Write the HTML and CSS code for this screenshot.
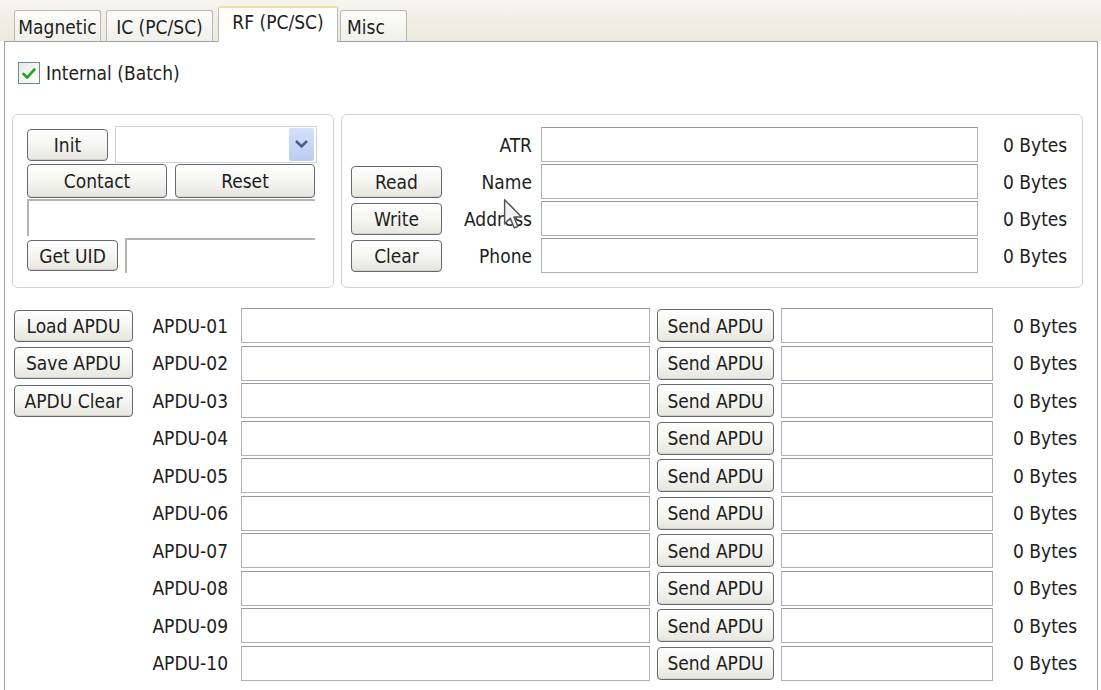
FILE: index.html
```html
<!DOCTYPE html>
<html>
<head>
<meta charset="utf-8">
<title>RF (PC/SC)</title>
<link rel="stylesheet" href="styles.css">
</head>
<body>
<div class="tabs">
  <div class="tab t-mag">Magnetic</div>
  <div class="tab t-ic">IC (PC/SC)</div>
  <div class="tab t-rf active">RF (PC/SC)</div>
  <div class="tab t-misc">Misc</div>
</div>
<div class="panel">
  <div class="check">
    <span class="box"><svg viewBox="0 0 22 22" width="22" height="22"><path d="M5 11 L9 15 L17 6" fill="none" stroke="#2aa12a" stroke-width="3" stroke-linecap="round" stroke-linejoin="round"/></svg></span>
    <span>Internal (Batch)</span>
  </div>

  <div class="groups">
    <div class="group g1">
      <div class="g1-row r1">
        <button class="btn b-init">Init</button>
        <div class="combo"><span class="drop"><svg viewBox="0 0 25 33" width="25" height="33"><path d="M7 13 L12.5 18.5 L18 13" fill="none" stroke="#4c5f86" stroke-width="2.6"/></svg></span></div>
      </div>
      <div class="g1-row r2">
        <button class="btn b-half">Contact</button>
        <button class="btn b-half">Reset</button>
      </div>
      <div class="sunken s-wide"></div>
      <div class="g1-row r4">
        <button class="btn b-uid">Get UID</button>
        <div class="sunken s-uid"></div>
      </div>
    </div>

    <div class="group g2">
      <div class="g2-grid">
        <span class="lbl r-1">ATR</span><div class="field f-card r-1"></div><span class="bytes r-1">0 Bytes</span>
        <button class="btn b-card r-2">Read</button><span class="lbl r-2">Name</span><div class="field f-card r-2"></div><span class="bytes r-2">0 Bytes</span>
        <button class="btn b-card r-3">Write</button><span class="lbl r-3">Address</span><div class="field f-card r-3"></div><span class="bytes r-3">0 Bytes</span>
        <button class="btn b-card r-4">Clear</button><span class="lbl r-4">Phone</span><div class="field f-card r-4"></div><span class="bytes r-4">0 Bytes</span>
      </div>
      <svg class="cursor" viewBox="0 0 13 21" width="21" height="34"><path d="M1 1 L1 16 L4.5 12.5 L7 18.5 L9.2 17.6 L6.8 11.8 L11.5 11.8 Z" fill="#f4f4f4" stroke="#555" stroke-width="0.9" stroke-linejoin="round"/></svg>
    </div>
  </div>

  <div class="apdu">
    <button class="btn b-side a-1">Load APDU</button>
    <button class="btn b-side a-2">Save APDU</button>
    <button class="btn b-side a-3">APDU Clear</button>

    <span class="alb a-1">APDU-01</span><div class="field af1 a-1"></div><button class="btn b-send a-1">Send APDU</button><div class="field af2 a-1"></div><span class="abytes a-1">0 Bytes</span>
    <span class="alb a-2">APDU-02</span><div class="field af1 a-2"></div><button class="btn b-send a-2">Send APDU</button><div class="field af2 a-2"></div><span class="abytes a-2">0 Bytes</span>
    <span class="alb a-3">APDU-03</span><div class="field af1 a-3"></div><button class="btn b-send a-3">Send APDU</button><div class="field af2 a-3"></div><span class="abytes a-3">0 Bytes</span>
    <span class="alb a-4">APDU-04</span><div class="field af1 a-4"></div><button class="btn b-send a-4">Send APDU</button><div class="field af2 a-4"></div><span class="abytes a-4">0 Bytes</span>
    <span class="alb a-5">APDU-05</span><div class="field af1 a-5"></div><button class="btn b-send a-5">Send APDU</button><div class="field af2 a-5"></div><span class="abytes a-5">0 Bytes</span>
    <span class="alb a-6">APDU-06</span><div class="field af1 a-6"></div><button class="btn b-send a-6">Send APDU</button><div class="field af2 a-6"></div><span class="abytes a-6">0 Bytes</span>
    <span class="alb a-7">APDU-07</span><div class="field af1 a-7"></div><button class="btn b-send a-7">Send APDU</button><div class="field af2 a-7"></div><span class="abytes a-7">0 Bytes</span>
    <span class="alb a-8">APDU-08</span><div class="field af1 a-8"></div><button class="btn b-send a-8">Send APDU</button><div class="field af2 a-8"></div><span class="abytes a-8">0 Bytes</span>
    <span class="alb a-9">APDU-09</span><div class="field af1 a-9"></div><button class="btn b-send a-9">Send APDU</button><div class="field af2 a-9"></div><span class="abytes a-9">0 Bytes</span>
    <span class="alb a-10">APDU-10</span><div class="field af1 a-10"></div><button class="btn b-send a-10">Send APDU</button><div class="field af2 a-10"></div><span class="abytes a-10">0 Bytes</span>
  </div>
</div>
</body>
</html>
```

FILE: styles.css
```css
* { box-sizing: border-box; }
html, body { margin: 0; padding: 0; }
body {
  width: 1101px;
  height: 690px;
  overflow: hidden;
  background: #fff;
  font-family: "DejaVu Sans Condensed", "DejaVu Sans", sans-serif;
  font-size: 19px;
  color: #1e1e1e;
}

/* ---------- tabs ---------- */
.tabs {
  height: 41px;
  display: flex;
  align-items: flex-end;
  padding-left: 14px;
  background: linear-gradient(#f6f5ee, #ece9dc);
}
.tab {
  height: 31px;
  display: flex;
  align-items: center;
  justify-content: center;
  border: 1px solid #b9bab2;
  border-bottom: none;
  border-radius: 3px 3px 0 0;
  background: linear-gradient(#fdfdfc, #f0efe9);
  white-space: nowrap;
  padding-top: 2px;
}
.t-mag { width: 87px; margin-right: 5px; }
.t-ic { width: 107px; margin-right: 5px; }
.t-rf { width: 120px; margin-right: 2px; }
.t-misc { width: 67px; justify-content: flex-start; padding-left: 6px; }
.tab.active {
  height: 36px;
  background: #fff;
  border-top: 2px solid #f1dfa6;
  position: relative;
  margin-bottom: -1px;
  align-items: flex-start;
  padding-top: 3px;
}

/* ---------- panel ---------- */
.panel {
  height: 649px;
  margin-left: 4px;
  width: 1094px;
  border: 1px solid #9ea3a4;
  border-bottom: none;
  padding: 19px 0 0 7px;
}

.check {
  display: flex;
  align-items: center;
  gap: 6px;
  margin-left: 6px;
  height: 23px;
}
.box {
  width: 22px;
  height: 22px;
  border: 1px solid #6f8796;
  background: linear-gradient(135deg, #e8ece6, #fbfcfa);
  display: flex;
}

/* ---------- groups ---------- */
.groups {
  display: flex;
  gap: 7px;
  margin-top: 30px;
}
.group {
  border: 1px solid #d3d4cd;
  border-radius: 6px;
  height: 174px;
}
.g1 {
  width: 322px;
  padding: 11px 0 0 14px;
}
.g1-row { display: flex; align-items: center; }
.r1 { height: 37px; gap: 7px; }
.r2 { height: 34px; gap: 8px; margin-top: 1px; }
.r4 { height: 35px; gap: 7px; margin-top: 2px; }

.combo {
  width: 202px;
  height: 37px;
  border: 1px solid #cfd3d8;
  background: #fff;
  display: flex;
  justify-content: flex-end;
  align-items: center;
  padding-right: 2px;
}
.drop {
  width: 25px;
  height: 33px;
  display: flex;
  background: linear-gradient(#d6e0fb, #bccbf3);
  border-radius: 2px;
}

.sunken {
  background: #fff;
  border-top: 2px solid #b3b3b0;
  border-left: 2px solid #b3b3b0;
}
.s-wide { width: 288px; height: 37px; margin-top: 1px; }
.s-uid { width: 190px; height: 35px; }

.g2 {
  width: 742px;
  position: relative;
  padding: 12px 0 0 9px;
}
.g2-grid {
  display: grid;
  grid-template-columns: 91px 81px 437px auto;
  grid-template-rows: repeat(4, 35px);
  column-gap: 9px;
  row-gap: 2px;
  align-items: center;
}
.r-1 { grid-row: 1; }
.r-2 { grid-row: 2; }
.r-3 { grid-row: 3; }
.r-4 { grid-row: 4; }
.g2-grid .btn { grid-column: 1; }
.g2-grid .lbl { grid-column: 2; text-align: right; white-space: nowrap; }
.g2-grid .field { grid-column: 3; }
.g2-grid .bytes { grid-column: 4; padding-left: 16px; white-space: nowrap; }
.cursor {
  position: absolute;
  left: 161px;
  top: 83px;
}

/* ---------- common controls ---------- */
.btn {
  font: inherit;
  color: #1e1e1e;
  padding: 0;
  border: 1px solid #656a70;
  border-radius: 4px;
  background: linear-gradient(#fefefe, #f4f4f0 55%, #e6e5de);
  box-shadow: inset 0 -1px 0 #d5d4cb, inset 0 1px 0 #fff;
  white-space: nowrap;
}
.b-init { width: 81px; height: 32px; }
.b-half { width: 140px; height: 34px; }
.b-uid { width: 91px; height: 31px; }
.b-card { width: 91px; height: 32px; }
.b-side { width: 119px; height: 32px; }
.b-send { width: 117px; height: 33px; }

.field {
  height: 35px;
  background: #fff;
  border: 1px solid #aab0b5;
  border-top-color: #949aa1;
}

/* ---------- APDU grid ---------- */
.apdu {
  margin-top: 20px;
  margin-left: 2px;
  display: grid;
  grid-template-columns: 119px 94px 409px 117px 212px auto;
  grid-template-rows: repeat(10, 35px);
  column-gap: 7px;
  row-gap: 2.5px;
  align-items: center;
}
.a-1 { grid-row: 1; }
.a-2 { grid-row: 2; }
.a-3 { grid-row: 3; }
.a-4 { grid-row: 4; }
.a-5 { grid-row: 5; }
.a-6 { grid-row: 6; }
.a-7 { grid-row: 7; }
.a-8 { grid-row: 8; }
.a-9 { grid-row: 9; }
.a-10 { grid-row: 10; }
.b-side { grid-column: 1; }
.alb { grid-column: 2; text-align: right; padding-right: 6px; white-space: nowrap; }
.af1 { grid-column: 3; }
.b-send { grid-column: 4; }
.af2 { grid-column: 5; }
.abytes { grid-column: 6; padding-left: 13px; white-space: nowrap; }
```
